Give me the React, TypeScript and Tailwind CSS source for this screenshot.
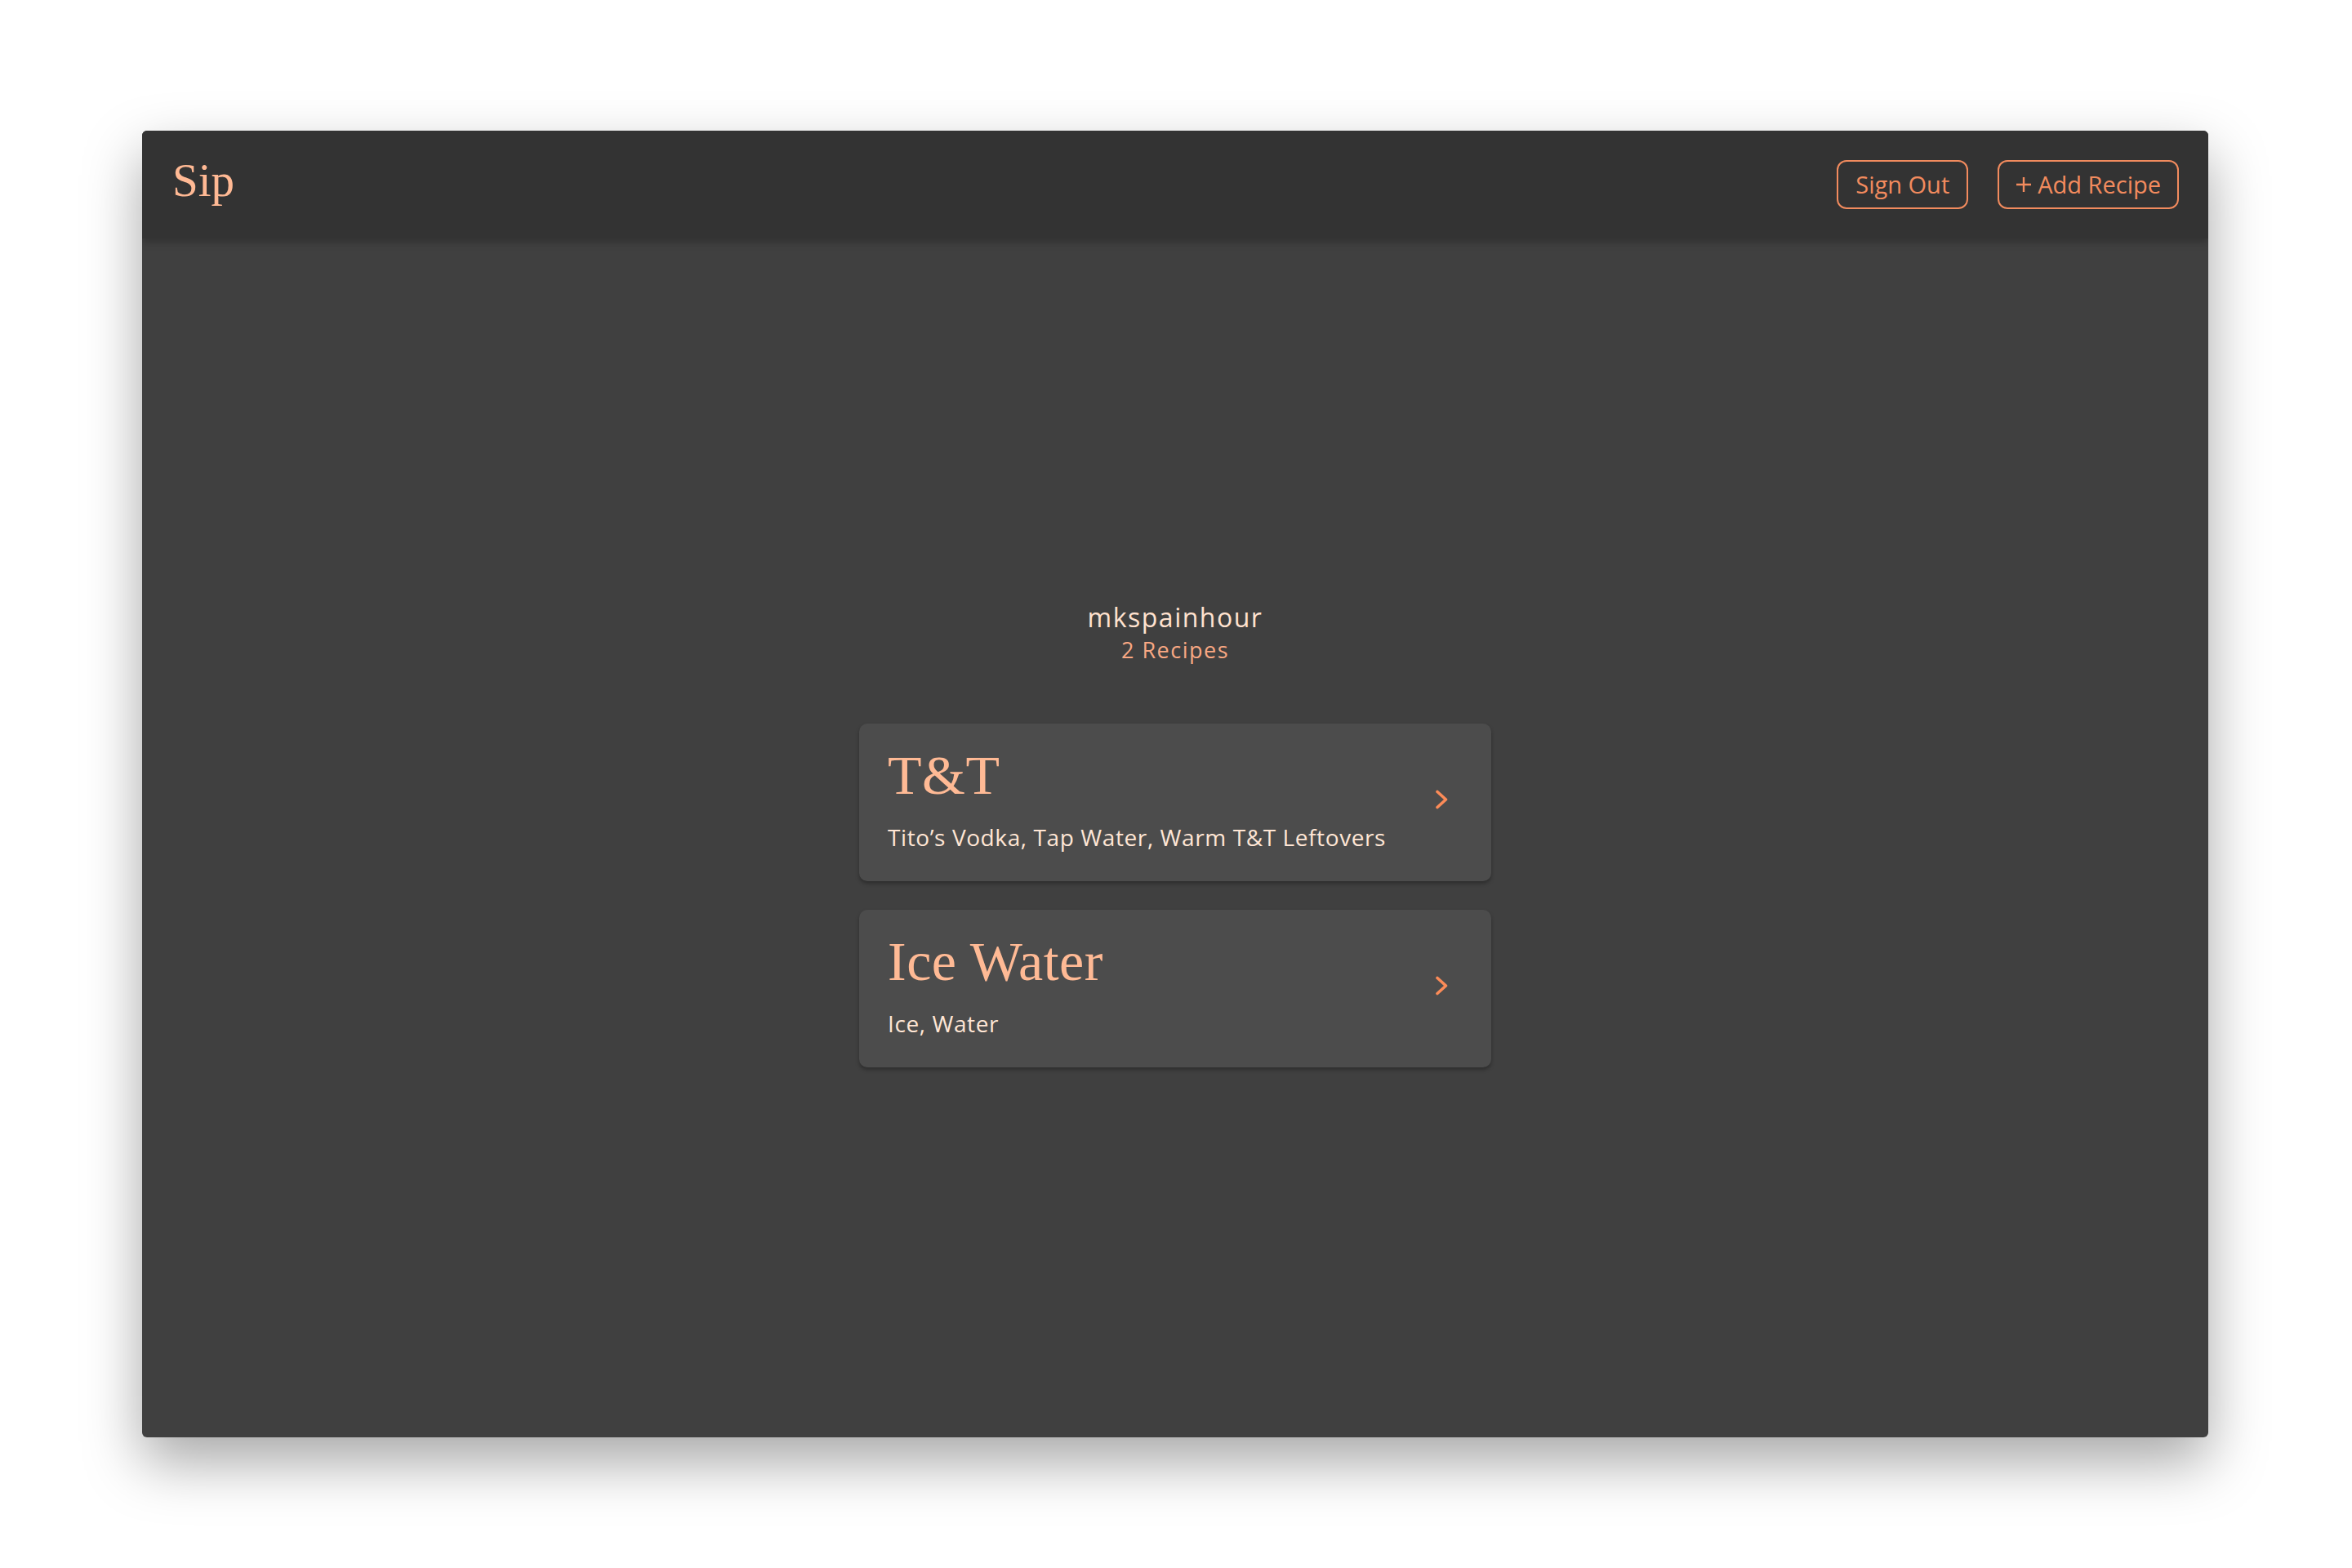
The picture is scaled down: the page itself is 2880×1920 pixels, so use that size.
import React from "react";

type Recipe = {
  name: string;
  ingredients: string[];
};

const recipes: Recipe[] = [
  { name: "T&T", ingredients: ["Tito’s Vodka", "Tap Water", "Warm T&T Leftovers"] },
  { name: "Ice Water", ingredients: ["Ice", "Water"] },
];

function Chevron() {
  return (
    <svg width="16" height="24" viewBox="0 0 16 24" fill="none" className="shrink-0">
      <path d="M3 2.5 L13.5 12 L3 21.5" stroke="#fb8b58" strokeWidth="3.6" strokeLinecap="round" strokeLinejoin="round" />
    </svg>
  );
}

function RecipeCard({ recipe }: { recipe: Recipe }) {
  return (
    <div className="flex items-center justify-between bg-[#4c4c4c] rounded-[10px] shadow-[0_3px_5px_rgba(0,0,0,0.3)] pl-[35px] pr-[53px] pt-[29px] pb-[37px] cursor-pointer">
      <div className="flex flex-col">
        <h3 className="font-['Liberation_Serif',serif] text-[68px] leading-[68px] tracking-[0.5px] text-[#ffba95]">
          {recipe.name}
        </h3>
        <p className="mt-[25px] font-['Open_Sans',sans-serif] font-medium text-[28px] leading-[34px] tracking-[0.6px] text-[#ffe6d5]">
          {recipe.ingredients.join(", ")}
        </p>
      </div>
      <Chevron />
    </div>
  );
}

export default function App() {
  return (
    <div className="min-h-screen bg-white pt-[160px] pl-[174px] pr-[176px] pb-[160px]">
      <div className="h-[1600px] flex flex-col rounded-[6px] overflow-hidden bg-[#404040] shadow-[0_30px_70px_rgba(0,0,0,0.35)]">
        <header className="h-[132px] shrink-0 bg-[#333333] flex items-center justify-between pl-[37px] pr-[36px] shadow-[0_4px_10px_rgba(0,0,0,0.25)] relative z-10">
          <h1 className="font-['Liberation_Serif',serif] text-[57px] text-[#ffb994] leading-none -mt-[12px]">Sip</h1>
          <div className="flex items-center gap-[36px] font-['Open_Sans',sans-serif] font-medium text-[29px] text-[#f28b5e]">
            <button className="h-[60px] px-[21px] border-2 border-[#f28b5e] rounded-[12px] flex items-center justify-center cursor-pointer">
              Sign Out
            </button>
            <button className="h-[60px] px-[20px] border-2 border-[#f28b5e] rounded-[12px] flex items-center justify-center gap-[7px] cursor-pointer">
              <svg width="20" height="20" viewBox="0 0 20 20" fill="none" className="shrink-0">
                <path d="M10 1 V19 M1 10 H19" stroke="#f28b5e" strokeWidth="2.4" />
              </svg>
              <span>Add Recipe</span>
            </button>
          </div>
        </header>
        <main className="flex-1 flex flex-col items-center justify-center pb-[8px]">
          <div className="flex flex-col items-center font-['Open_Sans',sans-serif] font-medium">
            <div className="text-[32px] leading-[38px] tracking-[1.5px] text-[#ffe2cf]">mkspainhour</div>
            <div className="mt-[5px] text-[27px] leading-[32px] tracking-[1.5px] text-[#f9a883]">{recipes.length} Recipes</div>
          </div>
          <div className="mt-[74px] w-[774px] flex flex-col gap-[35px]">
            {recipes.map((r) => (
              <RecipeCard key={r.name} recipe={r} />
            ))}
          </div>
        </main>
      </div>
    </div>
  );
}
